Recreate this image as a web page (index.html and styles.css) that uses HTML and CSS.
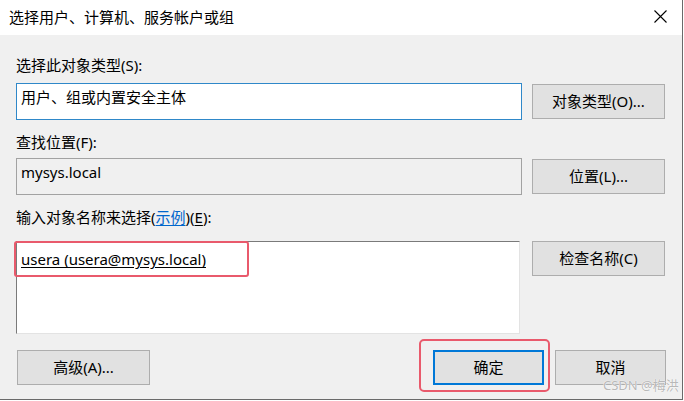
FILE: index.html
```html
<!DOCTYPE html>
<html lang="zh-CN">
<head>
<meta charset="utf-8">
<title>选择用户、计算机、服务帐户或组</title>
<link rel="stylesheet" href="styles.css">
</head>
<body>
<div class="dialog">
  <div class="titlebar">
    <span class="title">选择用户、计算机、服务帐户或组</span>
    <svg class="close" width="13" height="13" viewBox="0 0 13 13"><path d="M0.5 0.5 L12.5 12.5 M12.5 0.5 L0.5 12.5" stroke="#000" stroke-width="1.1" fill="none"/></svg>
  </div>
  <div class="content">
    <div class="label l1">选择此对象类型(S):</div>
    <div class="row r1">
      <div class="field focused">用户、组或内置安全主体</div>
      <div class="btn">对象类型(O)...</div>
    </div>
    <div class="label l2">查找位置(F):</div>
    <div class="row r2">
      <div class="field readonly">mysys.local</div>
      <div class="btn">位置(L)...</div>
    </div>
    <div class="label l3">输入对象名称来选择(<a class="link">示例</a>)(<u>E</u>):</div>
    <div class="row r3">
      <div class="field multi">
        <span class="resolved">usera (usera@mysys.local)</span>
        <span class="mark mark-name"></span>
      </div>
      <div class="btn">检查名称(C)</div>
    </div>
    <div class="footer">
      <div class="btn">高级(A)...</div>
      <div class="spacer"></div>
      <div class="btn small default">确定<span class="mark mark-ok"></span></div>
      <div class="btn small">取消</div>
    </div>
  </div>
  <div class="watermark">CSDN @梅洪</div>
</div>
</body>
</html>
```

FILE: styles.css
```css
html, body {
  margin: 0;
  padding: 0;
  background: #ffffff;
}
body {
  width: 684px;
  height: 401px;
  overflow: hidden;
  font-family: "Noto Sans", "Noto Sans CJK SC", sans-serif;
  font-size: 15px;
  color: #000;
}
u { text-decoration: underline; text-underline-offset: 2px; }
.dialog {
  position: relative;
  width: 682px;
  height: 399px;
  border-right: 1px solid #6a6a6a;
  border-bottom: 1px solid #6a6a6a;
  background: #f0f0f0;
  display: flex;
  flex-direction: column;
}
.titlebar {
  height: 35px;
  flex: none;
  background: #ffffff;
  display: flex;
  align-items: center;
  padding-left: 9px;
  padding-right: 15px;
}
.title {
  flex: 1;
  line-height: 20px;
  margin-top: -2px;
}
.close { display: block; margin-top: -3px; }
.content {
  padding-left: 16px;
  padding-right: 16px;
  display: flex;
  flex-direction: column;
}
.label {
  line-height: 20px;
  height: 20px;
}
.l1 { margin-top: 20px; }
.l2 { margin-top: 12px; }
.l3 { margin-top: 12px; }
.link { color: #0066cc; text-decoration: underline; text-underline-offset: 2px; }
.row {
  display: flex;
  gap: 10px;
  align-items: center;
}
.r1 { margin-top: 8px; }
.r2 { margin-top: 6px; }
.r3 { margin-top: 14px; align-items: flex-start; gap: 12px; }
.field {
  box-sizing: border-box;
  width: 506px;
  height: 37px;
  padding: 3px 0 0 4px;
  line-height: 20px;
  background: #ffffff;
}
.focused { border: 1px solid #2f88c9; }
.readonly { border: 1px solid #a2a2a2; background: #f0f0f0; }
.multi {
  position: relative;
  width: 504px;
  height: 93px;
  padding-top: 7px;
  border-top: 1px solid #7a7a7a;
  border-left: 1px solid #7a7a7a;
  border-right: 1px solid #e3e3e3;
  border-bottom: 1px solid #e3e3e3;
}
.resolved { text-decoration: underline; text-underline-offset: 2px; }
.btn {
  position: relative;
  box-sizing: border-box;
  width: 133px;
  height: 35px;
  flex: none;
  border: 1px solid #adadad;
  background: #e1e1e1;
  display: flex;
  align-items: center;
  justify-content: center;
  line-height: 20px;
  padding-bottom: 1px;
}
.btn.small { width: 111px; }
.btn.default { border: 2px solid #0078d7; }
.footer {
  display: flex;
  margin-top: 16px;
  padding-left: 1px;
  gap: 11px;
}
.spacer { flex: 1; }
.mark {
  position: absolute;
  box-sizing: border-box;
  border: 2px solid #e95a6c;
  pointer-events: none;
}
.mark-name {
  left: -3px;
  top: -1px;
  width: 235px;
  height: 36px;
  border-radius: 3px;
}
.mark-ok {
  left: -16px;
  top: -13px;
  width: 131px;
  height: 53px;
  border-radius: 5px;
}
.watermark {
  position: absolute;
  left: 603px;
  top: 376px;
  font-size: 13px;
  line-height: 18px;
  color: rgba(165, 165, 165, 0.8);
  text-shadow: 0 0 1px #ffffff, 0 0 1px #ffffff;
  white-space: nowrap;
}
```
